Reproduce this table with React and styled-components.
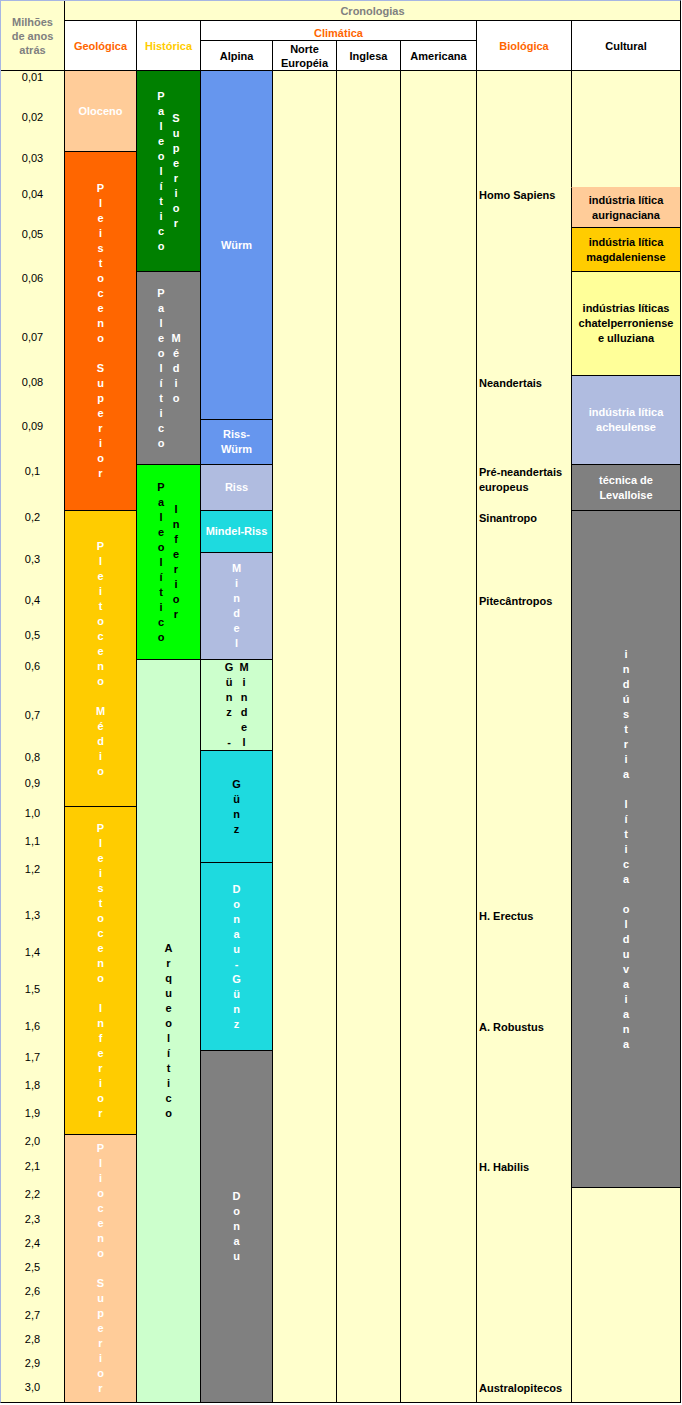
import React from 'react';
import styled, { createGlobalStyle } from 'styled-components';

const GlobalStyle = createGlobalStyle`
  body {
    margin: 0;
    background: #fff;
  }
`;

const YELLOW = '#ffffcc';
const ORANGE = '#ff6600';
const GOLD = '#ffcc00';
const PEACH = '#ffcc99';
const GREY = '#808080';
const BLUE = '#6696ee';
const LAVENDER = '#b0bce0';
const CYAN = '#1edadf';
const MINT = '#ccffcc';

// time ticks and the height (px, top line included) of each row
const ticks = [
  ['0,01', 40], ['0,02', 41], ['0,03', 36], ['0,04', 40], ['0,05', 44],
  ['0,06', 59], ['0,07', 45], ['0,08', 44], ['0,09', 45], ['0,1', 46],
  ['0,2', 42], ['0,3', 41], ['0,4', 35], ['0,5', 31], ['0,6', 49],
  ['0,7', 42], ['0,8', 26], ['0,9', 30], ['1,0', 28], ['1,1', 28],
  ['1,2', 46], ['1,3', 37], ['1,4', 37], ['1,5', 37], ['1,6', 31],
  ['1,7', 28], ['1,8', 28], ['1,9', 28], ['2,0', 25], ['2,1', 28],
  ['2,2', 25], ['2,3', 24], ['2,4', 24], ['2,5', 24], ['2,6', 24],
  ['2,7', 24], ['2,8', 24], ['2,9', 24], ['3,0', 22],
];

const LAST = ticks.length;

const blocks = [
  // Geológica
  { col: 2, from: 1, to: 2, bg: PEACH, color: '#fff', text: ['Oloceno'] },
  { col: 2, from: 3, to: 10, bg: ORANGE, color: '#fff', stack: ['Pleistoceno Superior'] },
  { col: 2, from: 11, to: 18, bg: GOLD, color: '#fff', stack: ['Pleitoceno Médio'] },
  { col: 2, from: 19, to: 28, bg: GOLD, color: '#fff', stack: ['Pleistoceno Inferior'] },
  { col: 2, from: 29, to: 39, bg: PEACH, color: '#fff', stack: ['Plioceno Superior'] },
  // Histórica
  { col: 3, from: 1, to: 5, bg: '#008000', color: '#fff', stack: ['Paleolítico', 'Superior'] },
  { col: 3, from: 6, to: 9, bg: GREY, color: '#fff', stack: ['Paleolítico', 'Médio'] },
  { col: 3, from: 10, to: 14, bg: '#00ff00', color: '#000', stack: ['Paleolítico', 'Inferior'] },
  { col: 3, from: 15, to: 39, bg: MINT, color: '#000', stack: ['Arqueolítico'] },
  // Alpina
  { col: 4, from: 1, to: 8, bg: BLUE, color: '#fff', text: ['Würm'] },
  { col: 4, from: 9, to: 9, bg: BLUE, color: '#fff', text: ['Riss-', 'Würm'] },
  { col: 4, from: 10, to: 10, bg: LAVENDER, color: '#fff', text: ['Riss'] },
  { col: 4, from: 11, to: 11, bg: CYAN, color: '#fff', text: ['Mindel-Riss'] },
  { col: 4, from: 12, to: 14, bg: LAVENDER, color: '#fff', stack: ['Mindel'] },
  { col: 4, from: 15, to: 16, bg: MINT, color: '#000', stack: ['Günz -', 'Mindel'] },
  { col: 4, from: 17, to: 20, bg: CYAN, color: '#000', stack: ['Günz'] },
  { col: 4, from: 21, to: 25, bg: CYAN, color: '#fff', stack: ['Donau-Günz'] },
  { col: 4, from: 26, to: 39, bg: GREY, color: '#fff', stack: ['Donau'] },
  // empty lanes
  { col: 5, from: 1, to: LAST, bg: YELLOW },
  { col: 6, from: 1, to: LAST, bg: YELLOW },
  { col: 7, from: 1, to: LAST, bg: YELLOW },
  { col: 8, from: 1, to: LAST, bg: YELLOW },
  // Cultural
  { col: 9, from: 1, to: 3, bg: YELLOW },
  { col: 9, from: 4, to: 4, bg: PEACH, color: '#000', open: true, text: ['indústria lítica', 'aurignaciana'] },
  { col: 9, from: 5, to: 5, bg: GOLD, color: '#000', text: ['indústria lítica', 'magdaleniense'] },
  { col: 9, from: 6, to: 7, bg: '#ffff99', color: '#000', text: ['indústrias líticas', 'chatelperroniense', 'e ulluziana'] },
  { col: 9, from: 8, to: 9, bg: LAVENDER, color: '#fff', text: ['indústria lítica', 'acheulense'] },
  { col: 9, from: 10, to: 10, bg: GREY, color: '#fff', text: ['técnica de', 'Levalloise'] },
  { col: 9, from: 11, to: 30, bg: GREY, color: '#fff', stack: ['indústria lítica olduvaiana'] },
  { col: 9, from: 31, to: 39, bg: YELLOW },
];

const species = [
  [4, ['Homo Sapiens']],
  [8, ['Neandertais']],
  [10, ['Pré-neandertais', 'europeus']],
  [11, ['Sinantropo']],
  [13, ['Pitecântropos']],
  [22, ['H. Erectus']],
  [25, ['A. Robustus']],
  [30, ['H. Habilis']],
  [39, ['Australopitecos']],
];

const Chart = styled.div`
  display: grid;
  grid-template-columns: 63px 72px 64px 72px 64px 64px 76px 95px 109px;
  grid-template-rows: ${p => p.$rows};
  width: max-content;
  border-top: 1px solid #a7b6e3;
  border-left: 1px solid #a7b6e3;
  border-right: 1px solid #000;
  border-bottom: 1px solid #000;
  background: ${YELLOW};
  font-family: "Liberation Sans", Arial, sans-serif;
  font-size: 11px;
  color: #000;

  * {
    box-sizing: border-box;
  }
`;

const Head = styled.div`
  grid-column: ${p => p.$col};
  grid-row: ${p => p.$row};
  display: flex;
  align-items: center;
  justify-content: center;
  text-align: center;
  padding-top: ${p => p.$drop || 0}px;
  background: ${p => p.$bg || '#fff'};
  color: ${p => p.$color || '#000'};
  font-weight: bold;
  line-height: 14px;
  border-left: ${p => (p.$noLeft ? 'none' : '1px solid #000')};
  border-top: ${p => (p.$noTop ? 'none' : '1px solid #000')};
`;

const Block = styled.div`
  grid-column: ${p => p.$col};
  grid-row: ${p => p.$from + 3} / ${p => p.$to + 4};
  display: flex;
  flex-direction: column;
  align-items: center;
  justify-content: center;
  text-align: center;
  white-space: nowrap;
  background: ${p => p.$bg};
  color: ${p => p.$color || '#000'};
  font-weight: bold;
  line-height: 15px;
  border-left: 1px solid #000;
  border-top: 1px solid ${p => (p.$open ? 'transparent' : '#000')};
`;

const Stack = styled.div`
  display: flex;
  align-items: center;
  gap: 4px;
`;

const StackCol = styled.div`
  display: flex;
  flex-direction: column;
`;

const Glyph = styled.span`
  display: block;
  width: 11px;
  height: 15px;
  line-height: 15px;
  text-align: center;
`;

const Tick = styled.div`
  grid-column: 1;
  grid-row: ${p => p.$row + 3};
  border-top: 1px solid ${p => (p.$first ? '#000' : 'transparent')};
  text-align: center;
  line-height: 13px;
`;

const Species = styled.div`
  grid-column: 8;
  grid-row: ${p => p.$row + 3};
  padding: 1px 0 0 3px;
  font-weight: bold;
  line-height: 15px;
  white-space: nowrap;
`;

const Lines = ({ lines }) => lines.map(l => <div key={l}>{l}</div>);

const Vertical = ({ cols }) => (
  <Stack>
    {cols.map(word => (
      <StackCol key={word}>
        {[...word].map((ch, i) => (
          <Glyph key={i}>{ch === ' ' ? '\u00a0' : ch}</Glyph>
        ))}
      </StackCol>
    ))}
  </Stack>
);

export default function App() {
  const rows = ['19px', '20px', '30px', ...ticks.map(t => `${t[1]}px`)].join(' ');

  return (
    <>
      <GlobalStyle />
      <Chart $rows={rows}>
        <Head $col="1" $row="1 / span 3" $bg={YELLOW} $color={GREY} $noLeft $noTop>
          <div>Milhões<br />de anos<br />atrás</div>
        </Head>
        <Head $col="2 / span 8" $row="1" $bg={YELLOW} $color={GREY} $noTop>Cronologias</Head>
        <Head $col="2" $row="2 / span 2" $color={ORANGE}>Geológica</Head>
        <Head $col="3" $row="2 / span 2" $color={GOLD}>Histórica</Head>
        <Head $col="4 / span 4" $row="2" $color={ORANGE} $drop={4}>Climática</Head>
        <Head $col="4" $row="3">Alpina</Head>
        <Head $col="5" $row="3">
          <div>Norte<br />Européia</div>
        </Head>
        <Head $col="6" $row="3">Inglesa</Head>
        <Head $col="7" $row="3">Americana</Head>
        <Head $col="8" $row="2 / span 2" $color={ORANGE}>Biológica</Head>
        <Head $col="9" $row="2 / span 2">Cultural</Head>

        {ticks.map(([label], i) => (
          <Tick key={label} $row={i + 1} $first={i === 0}>{label}</Tick>
        ))}

        {blocks.map((b, i) => (
          <Block key={i} $col={b.col} $from={b.from} $to={b.to} $bg={b.bg} $color={b.color} $open={b.open}>
            {b.text && <Lines lines={b.text} />}
            {b.stack && <Vertical cols={b.stack} />}
          </Block>
        ))}

        {species.map(([row, lines]) => (
          <Species key={lines[0]} $row={row}>
            <Lines lines={lines} />
          </Species>
        ))}
      </Chart>
    </>
  );
}
